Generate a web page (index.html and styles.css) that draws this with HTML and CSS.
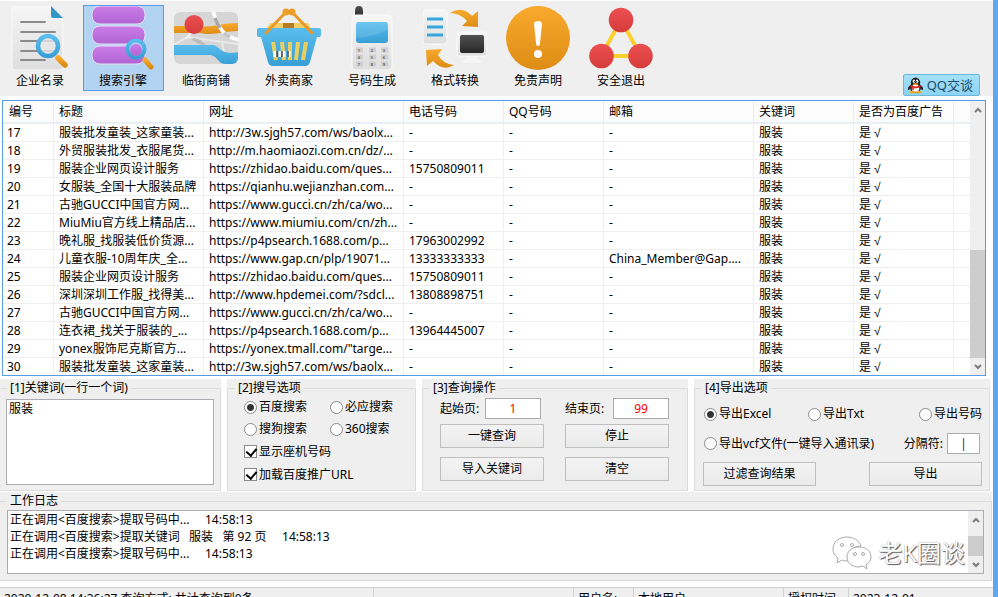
FILE: index.html
```
<!DOCTYPE html>
<html lang="zh-CN">
<head>
    <meta charset="UTF-8">
    <meta name="viewport" content="width=device-width, initial-scale=1.0">
    <title>搜索引擎</title>
    <link rel="stylesheet" href="styles.css">
</head>
<body>
    <svg class="defs" width="0" height="0" aria-hidden="true">
        <defs>
            <linearGradient id="paper" x1="0" y1="0" x2="0" y2="1"><stop offset="0" stop-color="#f6f6f6"/><stop offset="1" stop-color="#dedede"/></linearGradient>
            <linearGradient id="blue" x1="0" y1="0" x2="0" y2="1"><stop offset="0" stop-color="#5abdee"/><stop offset="1" stop-color="#389fd6"/></linearGradient>
            <linearGradient id="orange" x1="0" y1="0" x2="0" y2="1"><stop offset="0" stop-color="#f9a92c"/><stop offset="1" stop-color="#dd8d15"/></linearGradient>
            <linearGradient id="red" x1="0" y1="0" x2="0" y2="1"><stop offset="0" stop-color="#ec5050"/><stop offset="1" stop-color="#d63b3b"/></linearGradient>
            <linearGradient id="purple" x1="0" y1="0" x2="0" y2="1"><stop offset="0" stop-color="#cb7ce9"/><stop offset="1" stop-color="#b065d3"/></linearGradient>
            <linearGradient id="dark" x1="0" y1="0" x2="0" y2="1"><stop offset="0" stop-color="#505050"/><stop offset="1" stop-color="#282828"/></linearGradient>
        </defs>
    </svg>

    <div class="window">
        <nav class="toolbar">
            <button class="tool">
                <svg viewBox="0 0 64 64">
                    <path d="M6 0H43L55 12V61Q55 64 52 64H6Q4 64 4 62V2Q4 0 6 0Z" fill="url(#paper)" stroke="#fafafa"/>
                    <path d="M43 0L55 12H45Q43 12 43 10Z" fill="#3294c4"/>
                    <path d="M13 16H37M13 26H47M13 35H46M13 45H46M13 54H37" stroke="#8b8b8b" stroke-width="2" stroke-linecap="round"/>
                    <circle cx="40" cy="40" r="10" fill="#e6e6e6" fill-opacity=".8" stroke="url(#blue)" stroke-width="4.5"/>
                    <path d="M50 52L57 59" stroke="url(#orange)" stroke-width="5.5" stroke-linecap="round"/>
                </svg>
                <span>企业名录</span>
            </button>
            <button class="tool active">
                <svg viewBox="0 0 64 64">
                    <g fill="url(#purple)" stroke="#e4dff7">
                        <rect x="1" y="0" width="53" height="18" rx="8"/>
                        <rect x="1" y="20" width="53" height="18" rx="8"/>
                        <rect x="1" y="40" width="53" height="18" rx="8"/>
                    </g>
                    <circle cx="45" cy="43" r="8.5" fill="#b3d3f3" stroke="url(#blue)" stroke-width="4"/>
                    <circle cx="45" cy="44" r="6" fill="url(#purple)"/>
                    <path d="M54 54L60 61" stroke="url(#orange)" stroke-width="5" stroke-linecap="round"/>
                </svg>
                <span>搜索引擎</span>
            </button>
            <button class="tool">
                <svg viewBox="0 0 64 64">
                    <clipPath id="mapClip"><rect x="0" y="6" width="64" height="52" rx="6"/></clipPath>
                    <g clip-path="url(#mapClip)">
                        <path d="M0 6H64V58H0Z" fill="#d6d6d6"/>
                        <path d="M0 39L13 31L64 38M30 33L26 40M48 36L50 46" stroke="#e9e9e9" stroke-width="2" fill="none"/>
                        <path d="M0 20H24C40 22 46 17 64 17V25C48 25 42 30 26 27H0Z" fill="url(#orange)"/>
                        <path d="M0 39H38C46 39 46 50 64 46V58H52C43 58 43 48 35 49H0Z" fill="url(#blue)"/>
                        <path d="M39 5C44 22 50 31 65 34" fill="none" stroke="#fff" stroke-width="3.5"/>
                        <path d="M41 12C43 17 44 19 46 22" fill="none" stroke="#a9a9a9" stroke-width="3.5"/>
                        <path d="M50 27C52 29 54 30 56 31" fill="none" stroke="#c4c4c4" stroke-width="3.5"/>
                    </g>
                    <path d="M20 32Q29 33 33 41Q23 38 17 33Z" fill="#aaa" opacity=".6"/>
                    <path d="M19 24L12 33" stroke="#f1f1f1" stroke-width="2.5"/>
                    <circle cx="20" cy="18.500" r="9.500" fill="url(#red)"/>
                </svg>
                <span>临街商铺</span>
            </button>
            <button class="tool">
                <svg viewBox="0 0 64 64">
                    <path d="M13 17H51L55 24H9Z" fill="#f2cf62"/>
                    <rect x="26" y="17" width="11" height="7" fill="#b67a24"/>
                    <path d="M2 22H62Q64 22 64 24V29Q64 31 62 31H60L53 56Q52 60 48 60H16Q12 60 11 56L4 31H2Q0 31 0 29V24Q0 22 2 22Z" fill="url(#blue)"/>
                    <path d="M16 36L19 54M25 36L27 54M33 36V54M41 36L39 54M49 36L46 54" stroke="#e9cf61" stroke-width="4"/>
                    <path d="M18 45V51M23 45V51M27 45V51M32 45V51" stroke="#fff" stroke-width="3"/>
                    <path d="M20 45V51M25 45V51M31 45V51" stroke="#444" stroke-width="1.500"/>
                    <path d="M9 27L29 6M55 27L35 6" stroke="#e69a2a" stroke-width="3" stroke-linecap="round"/>
                    <circle cx="29" cy="6" r="3.500" fill="#ed9e26"/><circle cx="35" cy="6" r="3.500" fill="#ed9e26"/>
                </svg>
                <span>外卖商家</span>
            </button>
            <button class="tool">
                <svg viewBox="0 0 64 64">
                    <path d="M15 12V5Q15 0 19 0Q23 0 23 5V12Z" fill="url(#dark)"/>
                    <rect x="12" y="9" width="40" height="55" rx="4" fill="url(#paper)" stroke="#fafafa"/>
                    <rect x="16" y="16" width="32" height="21" rx="3" fill="url(#blue)"/>
                    <path d="M16 32Q35 31 48 23V19Q48 16 45 16H19Q16 16 16 19Z" fill="#fff" opacity=".12"/>
                    <path d="M16 44H23M29 44H36M41 44H48M16 51H23M29 51H36M41 51H48M16 58H23M29 58H36M41 58H48" stroke="#cfcfcf" stroke-width="5"/>
                    <g class="keys">
                        <text x="19" y="46">1</text><text x="32" y="46">2</text><text x="44" y="46">3</text>
                        <text x="19" y="53">4</text><text x="32" y="53">5</text><text x="44" y="53">6</text>
                        <text x="19" y="60">7</text><text x="32" y="60">8</text><text x="44" y="60">9</text>
                    </g>
                </svg>
                <span>号码生成</span>
            </button>
            <button class="tool">
                <svg viewBox="0 0 64 64">
                    <rect x="0" y="4" width="24" height="34" rx="3" fill="url(#paper)" stroke="#fbfbfb"/>
                    <path d="M4 13H20M4 21H20M4 29H20" stroke="#38a6dc" stroke-width="3"/>
                    <path d="M27 7Q39 -1 49 10L55 5V21L39 20L44 15Q37 7 27 7Z" fill="url(#orange)"/>
                    <path d="M31 59Q20 66 10 55L4 60L3 44L19 43L15 49Q20 58 31 59Z" fill="url(#orange)"/>
                    <path d="M44 49H54V53Q59 54 58 57H40Q39 54 44 53Z" fill="#f6f6f6"/>
                    <rect x="34" y="26" width="30" height="24" rx="2" fill="url(#paper)" stroke="#fbfbfb"/>
                    <rect x="37" y="29" width="24" height="18" rx="2" fill="url(#dark)"/>
                </svg>
                <span>格式转换</span>
            </button>
            <button class="tool">
                <svg viewBox="0 0 64 64">
                    <circle cx="32" cy="32" r="32" fill="url(#orange)"/>
                    <path d="M28 18Q28 15 32 15Q36 15 36 18L34 37Q34 40 32 40Q30 40 30 37Z" fill="#fff"/>
                    <circle cx="32" cy="48" r="4" fill="#fff"/>
                </svg>
                <span>免责声明</span>
            </button>
            <button class="tool">
                <svg viewBox="0 0 64 64">
                    <path d="M32 14L12 50H52Z" fill="none" stroke="#fbd02c" stroke-width="4"/>
                    <circle cx="32" cy="14" r="12.300" fill="url(#red)"/>
                    <circle cx="12.500" cy="50" r="12.300" fill="url(#red)"/>
                    <circle cx="51.500" cy="50" r="12.300" fill="url(#red)"/>
                </svg>
                <span>安全退出</span>
            </button>

            <button class="qq-btn">
                <svg viewBox="0 0 16 17">
                    <path d="M3 8Q1 9 0 13L2 12M13 8Q15 9 16 13L14 12" fill="#222" stroke="#222"/>
                    <ellipse cx="8" cy="10.500" rx="6" ry="5.500" fill="#222"/>
                    <ellipse cx="8" cy="5.500" rx="5" ry="5.500" fill="#222"/>
                    <ellipse cx="8" cy="11.500" rx="4" ry="4" fill="#fff"/>
                    <ellipse cx="6.300" cy="4" rx="1.300" ry="1.800" fill="#fff"/>
                    <ellipse cx="9.700" cy="4" rx="1.300" ry="1.800" fill="#fff"/>
                    <circle cx="6.700" cy="4.200" r=".6" fill="#000"/><circle cx="9.300" cy="4.200" r=".6" fill="#000"/>
                    <ellipse cx="8" cy="7" rx="3" ry="1" fill="#f5a41e"/>
                    <path d="M2.500 8Q8 11 13.500 8V10Q8 12.500 6.500 11V13H4.500V10.500L2.500 10Z" fill="#e0261d"/>
                    <ellipse cx="4.500" cy="15.700" rx="3" ry="1.300" fill="#f5a41e"/>
                    <ellipse cx="11.500" cy="15.700" rx="3" ry="1.300" fill="#f5a41e"/>
                </svg>
                QQ交谈
            </button>
        </nav>

        <section class="list-view">
            <table>
                <colgroup>
                    <col class="c-no"><col class="c-title"><col class="c-url"><col class="c-tel"><col class="c-qq"><col class="c-mail"><col class="c-key"><col class="c-ad"><col>
                </colgroup>
                <thead>
                    <tr><th>编号</th><th>标题</th><th>网址</th><th>电话号码</th><th>QQ号码</th><th>邮箱</th><th>关键词</th><th>是否为百度广告</th><th></th></tr>
                </thead>
                <tbody>
                    <tr><td>17</td><td>服装批发童装_这家童装...</td><td>http://3w.sjgh57.com/ws/baolx...</td><td>-</td><td>-</td><td>-</td><td>服装</td><td>是 √</td><td></td></tr>
                    <tr><td>18</td><td>外贸服装批发_衣服尾货...</td><td>http://m.haomiaozi.com.cn/dz/...</td><td>-</td><td>-</td><td>-</td><td>服装</td><td>是 √</td><td></td></tr>
                    <tr><td>19</td><td>服装企业网页设计服务</td><td>https://zhidao.baidu.com/ques...</td><td>15750809011</td><td>-</td><td>-</td><td>服装</td><td>是 √</td><td></td></tr>
                    <tr><td>20</td><td>女服装_全国十大服装品牌</td><td>https://qianhu.wejianzhan.com...</td><td>-</td><td>-</td><td>-</td><td>服装</td><td>是 √</td><td></td></tr>
                    <tr><td>21</td><td>古驰GUCCI中国官方网...</td><td>https://www.gucci.cn/zh/ca/wo...</td><td>-</td><td>-</td><td>-</td><td>服装</td><td>是 √</td><td></td></tr>
                    <tr><td>22</td><td>MiuMiu官方线上精品店...</td><td>https://www.miumiu.com/cn/zh...</td><td>-</td><td>-</td><td>-</td><td>服装</td><td>是 √</td><td></td></tr>
                    <tr><td>23</td><td>晚礼服_找服装低价货源...</td><td>https://p4psearch.1688.com/p...</td><td>17963002992</td><td>-</td><td>-</td><td>服装</td><td>是 √</td><td></td></tr>
                    <tr><td>24</td><td>儿童衣服-10周年庆_全...</td><td>https://www.gap.cn/plp/19071...</td><td>13333333333</td><td>-</td><td>China_Member@Gap....</td><td>服装</td><td>是 √</td><td></td></tr>
                    <tr><td>25</td><td>服装企业网页设计服务</td><td>https://zhidao.baidu.com/ques...</td><td>15750809011</td><td>-</td><td>-</td><td>服装</td><td>是 √</td><td></td></tr>
                    <tr><td>26</td><td>深圳深圳工作服_找得美...</td><td>http://www.hpdemei.com/?sdcl...</td><td>13808898751</td><td>-</td><td>-</td><td>服装</td><td>是 √</td><td></td></tr>
                    <tr><td>27</td><td>古驰GUCCI中国官方网...</td><td>https://www.gucci.cn/zh/ca/wo...</td><td>-</td><td>-</td><td>-</td><td>服装</td><td>是 √</td><td></td></tr>
                    <tr><td>28</td><td>连衣裙_找关于服装的_...</td><td>https://p4psearch.1688.com/p...</td><td>13964445007</td><td>-</td><td>-</td><td>服装</td><td>是 √</td><td></td></tr>
                    <tr><td>29</td><td>yonex服饰尼克斯官方...</td><td>https://yonex.tmall.com/"targe...</td><td>-</td><td>-</td><td>-</td><td>服装</td><td>是 √</td><td></td></tr>
                    <tr><td>30</td><td>服装批发童装_这家童装...</td><td>http://3w.sjgh57.com/ws/baolx...</td><td>-</td><td>-</td><td>-</td><td>服装</td><td>是 √</td><td></td></tr>
                </tbody>
            </table>
            <div class="scrollbar list-scroll">
                <button aria-label="向上"><svg viewBox="0 0 8 6"><path d="M1 5L4 2L7 5"/></svg></button>
                <div class="track"><div class="thumb"></div></div>
                <button aria-label="向下"><svg viewBox="0 0 8 6"><path d="M1 1L4 4L7 1"/></svg></button>
            </div>
        </section>

        <div class="panels">
            <div class="panel">
                <fieldset class="keywords">
                    <legend>[1]关键词(一行一个词)</legend>
                    <textarea aria-label="关键词">服装</textarea>
                </fieldset>
            </div>
            <div class="panel">
                <fieldset class="options">
                    <legend>[2]搜号选项</legend>
                    <label><input type="radio" name="engine" checked>百度搜索</label>
                    <label><input type="radio" name="engine">必应搜索</label>
                    <label><input type="radio" name="engine">搜狗搜索</label>
                    <label><input type="radio" name="engine">360搜索</label>
                    <label class="wide"><input type="checkbox" checked>显示座机号码</label>
                    <label class="wide"><input type="checkbox" checked>加载百度推广URL</label>
                </fieldset>
            </div>
            <div class="panel">
                <fieldset class="query">
                    <legend>[3]查询操作</legend>
                    <label class="page start">起始页: <input type="text" value="1"></label>
                    <label class="page">结束页: <input type="text" value="99"></label>
                    <button class="btn">一键查询</button>
                    <button class="btn">停止</button>
                    <button class="btn">导入关键词</button>
                    <button class="btn">清空</button>
                </fieldset>
            </div>
            <div class="panel">
                <fieldset class="export">
                    <legend>[4]导出选项</legend>
                    <div class="radios">
                        <label><input type="radio" name="format" checked>导出Excel</label>
                        <label><input type="radio" name="format">导出Txt</label>
                        <label><input type="radio" name="format">导出号码</label>
                    </div>
                    <div class="row">
                        <label><input type="radio" name="format">导出vcf文件(一键导入通讯录)</label>
                        <label class="separator">分隔符: <input type="text" value="|"></label>
                    </div>
                    <div class="row actions">
                        <button class="btn">过滤查询结果</button>
                        <button class="btn">导出</button>
                    </div>
                </fieldset>
            </div>
        </div>

        <div class="panel log-panel">
            <fieldset>
                <legend>工作日志</legend>
                <div class="log">
                    <textarea readonly aria-label="工作日志">正在调用&lt;百度搜索&gt;提取号码中...     14:58:13
正在调用&lt;百度搜索&gt;提取关键词   服装   第 92 页     14:58:13
正在调用&lt;百度搜索&gt;提取号码中...     14:58:13</textarea>
                    <div class="scrollbar log-scroll">
                        <button aria-label="向上"><svg viewBox="0 0 8 6"><path d="M1 5L4 2L7 5"/></svg></button>
                        <div class="track"><div class="thumb"></div></div>
                        <button aria-label="向下"><svg viewBox="0 0 8 6"><path d="M1 1L4 4L7 1"/></svg></button>
                    </div>
                    <div class="watermark">
                        <svg viewBox="0 0 40 34">
                            <path d="M15 1C7 1 1 6 1 13C1 17 3 20 6 22L5 27L10 24C12 25 14 25 16 25C14 17 20 10 29 10C27 4 21 1 15 1Z"/>
                            <path d="M27 11C20 11 15 15 15 21C15 27 20 31 27 31L31 30L35 33L34 29C37 27 39 24 39 21C39 15 34 11 27 11Z"/>
                            <circle cx="10" cy="9" r="1.500"/><circle cx="20" cy="9" r="1.500"/>
                            <circle cx="23" cy="18" r="1.500"/><circle cx="31" cy="18" r="1.500"/>
                        </svg>
                        <span>老K圈谈</span>
                    </div>
                </div>
            </fieldset>
        </div>

        <footer class="status">
            <span class="s-main">2020-12-08 14:36:27 查询方式: 共计查询到0条</span>
            <span class="s-blank"></span>
            <span class="s-label">用户名:</span>
            <span class="s-user">本地用户</span>
            <span class="s-time">授权时间</span>
            <span>2023-12-01</span>
        </footer>
    </div>
</body>
</html>
```

FILE: styles.css
```
:root {
    --face: #efefef;
    --accent: #569de5;
    --frame: #5fa5f0;
    --line: #dcdcdc;
    --field: #abadb3;
}

* {
    margin: 0;
    padding: 0;
    box-sizing: border-box;
}

body {
    height: 100vh;
    overflow: hidden;
    background: #fff;
    color: #000;
    font-size: 12px;
    line-height: 18px;
    font-family: "Noto Sans", "Liberation Sans", "Noto Sans CJK SC", sans-serif;
}

button,
input,
textarea {
    font: inherit;
    color: inherit;
}

.defs {
    position: absolute;
}

.window {
    min-height: 100vh;
    border-right: 5px solid var(--frame);
}

/* toolbar */
.toolbar {
    display: flex;
    gap: 2px;
    padding: 4px 13px 0 0;
    background: var(--face);
    border-top: 1px solid #fff;
    margin-bottom: 4px;
}

.tool {
    width: 81px;
    height: 86px;
    margin-bottom: 5px;
    padding-right: 1px;
    border: 1px solid transparent;
    background: none;
    display: flex;
    flex-direction: column;
    align-items: center;
    gap: 2px;
}

.tool svg {
    width: 64px;
    height: 64px;
    flex: none;
}

.tool.active {
    background: #b3d3f3;
    border-color: var(--accent);
}

.keys {
    font-size: 4px;
    font-weight: bold;
    text-anchor: middle;
    fill: #666;
}

.qq-btn {
    display: flex;
    align-items: center;
    gap: 4px;
    align-self: flex-end;
    margin-left: auto;
    height: 22px;
    padding: 0 6px 0 4px;
    border: 1px solid #68b8df;
    border-radius: 2px;
    background: linear-gradient(#a5e1f8, #8dd3f5);
    color: #1c4a66;
    font-size: 13px;
    white-space: nowrap;
}

.qq-btn svg {
    width: 15px;
    height: 17px;
}

/* result list */
.list-view {
    display: flex;
    margin: 0 7px 3px 2px;
    border: 1px solid var(--accent);
}

table {
    flex: 1;
    width: 100%;
    table-layout: fixed;
    border-spacing: 0;
}

.c-no { width: 51px; }
.c-title { width: 150px; }
.c-url { width: 200px; }
.c-tel,
.c-qq,
.c-key,
.c-ad { width: 100px; }
.c-mail { width: 150px; }

th,
td {
    text-align: left;
    font-weight: normal;
    white-space: nowrap;
    overflow: hidden;
    padding-left: 5px;
}

th {
    height: 22px;
    background: #fcfcfc;
    border-right: 1px solid #e3eefa;
    border-bottom: 1px solid #e3eefa;
}

td {
    height: 18px;
    line-height: 17px;
    border-top: 1px solid #efefef;
    border-right: 1px solid #efefef;
}

th:first-child {
    padding-left: 6px;
}

td:first-child {
    padding-left: 4px;
}

th:last-child,
td:last-child {
    border-right: 0;
}

.scrollbar {
    width: 15px;
    flex: none;
    display: flex;
    flex-direction: column;
    background: var(--face);
}

.scrollbar button {
    height: 17px;
    border: 0;
    background: none;
    display: flex;
    align-items: center;
    justify-content: center;
}

.scrollbar svg {
    width: 8px;
    height: 6px;
    fill: none;
    stroke: #7d7d7d;
    stroke-width: 2;
}

.track {
    flex: 1;
    display: flex;
    flex-direction: column;
    justify-content: flex-end;
}

.thumb {
    background: #cdcdcd;
}

.list-scroll .thumb {
    height: 45%;
}

.log-scroll .thumb {
    height: 70%;
}

/* group boxes */
.panels {
    display: grid;
    grid-template-columns: 221fr 189fr 266fr 296fr;
    gap: 6px;
    padding-right: 3px;
}

.panel {
    background: var(--face);
}

fieldset {
    --inset: 7px;
    height: 100%;
    min-width: 0;
    padding-left: var(--inset);
    border: 1px solid var(--line);
}

.panels fieldset {
    min-height: 112px;
}

.panels .panel:first-child fieldset,
.log-panel fieldset {
    border-left: 0;
}

/* captions start at the same place whatever the box's own padding */
legend {
    margin-left: calc(7px - var(--inset));
    padding: 0 3px;
}

.keywords {
    --inset: 6px;
    padding: 2px 6px 5px var(--inset);
}

.keywords textarea {
    display: block;
    width: 100%;
    height: 86px;
    padding: 0 2px;
    border: 1px solid var(--field);
    background: #fff;
    resize: none;
    outline: none;
}

.options {
    --inset: 16px;
    display: grid;
    grid-template-columns: 86px 1fr;
    align-content: start;
    gap: 2px 0;
}

label {
    display: flex;
    align-items: center;
    white-space: nowrap;
}

.options label {
    height: 20px;
}

.options .wide {
    grid-column: span 2;
    height: 21px;
}

input[type="radio"],
input[type="checkbox"] {
    appearance: none;
    width: 13px;
    height: 13px;
    margin-right: 2px;
    border: 1px solid #8a8a8a;
    background: #fff;
    flex: none;
}

input[type="radio"] {
    border-radius: 50%;
}

input[type="radio"]:checked {
    background: radial-gradient(circle, #333 3px, #fff 4px);
}

input[type="checkbox"]:checked::before {
    content: '';
    display: block;
    width: 5px;
    height: 8px;
    margin-left: 3px;
    border: solid #000;
    border-width: 0 2px 2px 0;
    transform: rotate(40deg);
}

input[type="text"] {
    height: 21px;
    border: 1px solid var(--field);
    background: #fff;
    text-align: center;
    outline: none;
}

.btn {
    height: 24px;
    border: 1px solid #bfbfbf;
    background: linear-gradient(#f3f3f3, #ebebeb);
}

.query {
    --inset: 17px;
    display: grid;
    grid-template-columns: 1fr 1fr;
    align-content: start;
    gap: 0 21px;
    padding: 1px 18px 0 var(--inset);
}

.query .btn {
    margin-bottom: 9px;
}

.page {
    justify-content: space-between;
    margin-bottom: 5px;
}

.start {
    padding-right: 3px;
}

.page input {
    width: 56px;
    color: #f00;
}

.export {
    --inset: 8px;
    padding: 7px 7px 4px var(--inset);
}

.radios {
    display: grid;
    grid-template-columns: 104fr 111fr 63fr;
    height: 20px;
    padding-left: 1px;
    margin-bottom: 9px;
}

.row {
    display: flex;
    align-items: center;
    justify-content: space-between;
    padding: 0 2px 0 1px;
}

.separator {
    gap: 4px;
}

.separator input {
    width: 33px;
    color: #505;
}

.actions {
    padding: 0;
    margin-top: 8px;
}

.actions .btn {
    width: 113px;
}

/* log */
.log-panel {
    margin: 1px 1px 6px 0;
}

.log-panel fieldset {
    padding: 0 7px 6px var(--inset);
}

.log {
    position: relative;
    display: flex;
    height: 64px;
    border: 1px solid var(--field);
    background: #fff;
}

.log textarea {
    flex: 1;
    min-width: 0;
    padding: 0 2px;
    border: 0;
    line-height: 17px;
    resize: none;
    outline: none;
    overflow: hidden;
}

.watermark {
    position: absolute;
    right: 18px;
    bottom: 3px;
    display: flex;
    align-items: center;
    gap: 6px;
    color: #fff;
    font-size: 24px;
    line-height: 34px;
    text-shadow: 1px 1px 1px #555, 0 0 1px #888;
    pointer-events: none;
}

.watermark svg {
    width: 40px;
    height: 34px;
    fill: #fff;
    stroke: #aaa;
}

/* status bar */
.status {
    display: flex;
    height: 24px;
    border-top: 1px solid #d0d0d0;
    background: var(--face);
}

.status span {
    padding: 2px 4px 0;
    border-right: 1px solid #d0d0d0;
    white-space: nowrap;
}

.status span:last-child {
    flex: 1;
    border-right: 0;
}

.s-main { width: 374px; }
.s-blank { width: 200px; }
.s-label { width: 60px; }
.s-user { width: 150px; }
.s-time { width: 65px; }
```
